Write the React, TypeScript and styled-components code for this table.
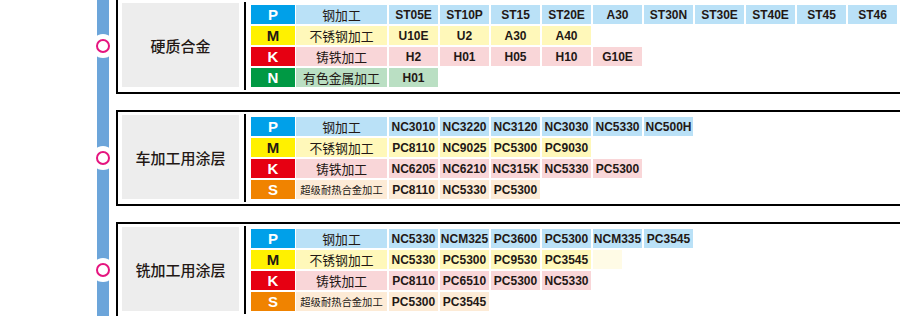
import React from "react";
import styled, { createGlobalStyle } from "styled-components";

const GlobalStyle = createGlobalStyle`
  html, body {
    margin: 0;
    padding: 0;
    background: #ffffff;
    overflow: hidden;
  }
  body {
    font-family: "Liberation Sans", "Noto Sans CJK SC", sans-serif;
    color: #231815;
  }
`;

type ToneKey = "P" | "M" | "K" | "N" | "S";

const tones: Record<ToneKey, { solid: string; pale: string; fg: string }> = {
  P: { solid: "#00A0E9", pale: "#BAE1F7", fg: "#ffffff" },
  M: { solid: "#FFF100", pale: "#FFF8BA", fg: "#231815" },
  K: { solid: "#E60012", pale: "#F9D6D8", fg: "#ffffff" },
  N: { solid: "#009944", pale: "#BADFC3", fg: "#ffffff" },
  S: { solid: "#F08300", pale: "#FDEBD6", fg: "#ffffff" },
};

const Page = styled.div`
  width: 900px;
  height: 316px;
  overflow: hidden;
  background: linear-gradient(
    to right,
    transparent 97px,
    #6ca5da 97px,
    #6ca5da 109px,
    transparent 109px
  );
`;

const Stack = styled.div`
  display: flex;
  flex-direction: column;
  gap: 16px;
  margin-top: -2px;
`;

const Section = styled.section`
  display: flex;
  height: 96px;
  flex: none;
`;

const Rail = styled.div`
  width: 116px;
  flex: none;
  display: flex;
  align-items: center;
  padding-left: 96px;
  box-sizing: border-box;
`;

const Marker = styled.span`
  width: 14px;
  height: 14px;
  box-sizing: border-box;
  border: 2.5px solid #e5157f;
  border-radius: 50%;
  background: #ffffff;
  box-shadow: 0 0 0 5px #ffffff;
`;

const Box = styled.div`
  width: 820px;
  flex: none;
  box-sizing: border-box;
  border: 2px solid #000000;
  border-right: none;
  display: flex;
  align-items: flex-start;
`;

const Label = styled.div`
  width: 117px;
  height: 84px;
  margin: 3px 0 0 4px;
  flex: none;
  background: #ededed;
  display: flex;
  align-items: center;
  justify-content: center;
  font-family: "Noto Sans CJK SC", sans-serif;
  font-size: 15px;
  font-weight: 500;
  color: #231815;
`;

const Divider = styled.div`
  width: 2px;
  height: 88px;
  margin: 2px 0 0 5px;
  flex: none;
  background: #000000;
`;

const Table = styled.div`
  margin: 5px 0 0 5px;
  display: flex;
  flex-direction: column;
  gap: 2px;
`;

const Row = styled.div`
  display: flex;
  height: 19px;
`;

const Letter = styled.div<{ $tone: ToneKey }>`
  width: 44px;
  margin-right: 1px;
  flex: none;
  background: ${(p) => tones[p.$tone].solid};
  color: ${(p) => tones[p.$tone].fg};
  display: flex;
  align-items: center;
  justify-content: center;
  font-family: "Liberation Sans", sans-serif;
  font-weight: 700;
  font-size: 15px;
`;

const Desc = styled.div<{ $tone: ToneKey; $small?: boolean }>`
  width: 91px;
  margin-right: 2px;
  flex: none;
  background: ${(p) => tones[p.$tone].pale};
  display: flex;
  align-items: center;
  justify-content: center;
  font-family: "Noto Sans CJK SC", sans-serif;
  font-size: ${(p) => (p.$small ? "10.3px" : "12.8px")};
  color: #231815;
  white-space: nowrap;
`;

const Codes = styled.div`
  display: flex;
  gap: 2px;
`;

const Code = styled.div<{ $tone: ToneKey }>`
  width: 49px;
  flex: none;
  background: ${(p) => tones[p.$tone].pale};
  display: flex;
  align-items: center;
  justify-content: center;
  font-family: "Liberation Sans", sans-serif;
  font-weight: 700;
  font-size: 12px;
  color: #231815;
  white-space: nowrap;
`;

const Filler = styled.div`
  width: 29px;
  flex: none;
  background: #fffbe6;
`;

type RowData = { tone: ToneKey; desc: string; codes: string[]; filler?: boolean };
type SectionData = { label: string; rows: RowData[] };

const sections: SectionData[] = [
  {
    label: "硬质合金",
    rows: [
      {
        tone: "P",
        desc: "钢加工",
        codes: ["ST05E", "ST10P", "ST15", "ST20E", "A30", "ST30N", "ST30E", "ST40E", "ST45", "ST46"],
      },
      { tone: "M", desc: "不锈钢加工", codes: ["U10E", "U2", "A30", "A40"] },
      { tone: "K", desc: "铸铁加工", codes: ["H2", "H01", "H05", "H10", "G10E"] },
      { tone: "N", desc: "有色金属加工", codes: ["H01"] },
    ],
  },
  {
    label: "车加工用涂层",
    rows: [
      { tone: "P", desc: "钢加工", codes: ["NC3010", "NC3220", "NC3120", "NC3030", "NC5330", "NC500H"] },
      { tone: "M", desc: "不锈钢加工", codes: ["PC8110", "NC9025", "PC5300", "PC9030"] },
      { tone: "K", desc: "铸铁加工", codes: ["NC6205", "NC6210", "NC315K", "NC5330", "PC5300"] },
      { tone: "S", desc: "超级耐热合金加工", codes: ["PC8110", "NC5330", "PC5300"] },
    ],
  },
  {
    label: "铣加工用涂层",
    rows: [
      { tone: "P", desc: "钢加工", codes: ["NC5330", "NCM325", "PC3600", "PC5300", "NCM335", "PC3545"] },
      { tone: "M", desc: "不锈钢加工", codes: ["NC5330", "PC5300", "PC9530", "PC3545"], filler: true },
      { tone: "K", desc: "铸铁加工", codes: ["PC8110", "PC6510", "PC5300", "NC5330"] },
      { tone: "S", desc: "超级耐热合金加工", codes: ["PC5300", "PC3545"] },
    ],
  },
];

export default function App() {
  return (
    <>
      <GlobalStyle />
      <Page>
        <Stack>
          {sections.map((s) => (
            <Section key={s.label}>
              <Rail>
                <Marker />
              </Rail>
              <Box>
                <Label>{s.label}</Label>
                <Divider />
                <Table>
                  {s.rows.map((r) => (
                    <Row key={r.tone}>
                      <Letter $tone={r.tone}>{r.tone}</Letter>
                      <Desc $tone={r.tone} $small={r.desc.length > 6}>
                        {r.desc}
                      </Desc>
                      <Codes>
                        {r.codes.map((c, i) => (
                          <Code key={c + i} $tone={r.tone}>
                            {c}
                          </Code>
                        ))}
                        {r.filler && <Filler />}
                      </Codes>
                    </Row>
                  ))}
                </Table>
              </Box>
            </Section>
          ))}
        </Stack>
      </Page>
    </>
  );
}
